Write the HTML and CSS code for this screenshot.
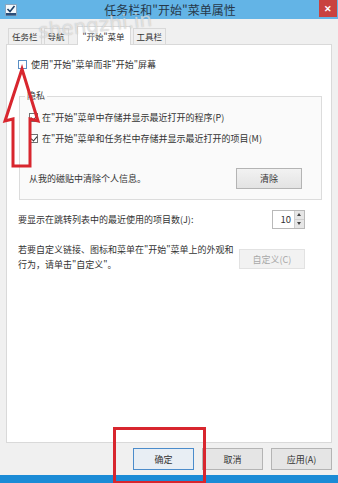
FILE: index.html
```html
<!DOCTYPE html>
<html lang="zh-CN">
<head>
    <meta charset="UTF-8">
    <title>任务栏和"开始"菜单属性</title>
    <link rel="stylesheet" href="styles.css">
</head>
<body>
    <div class="window">
        <div class="titlebar">
            <svg class="app-icon" width="12" height="12" viewBox="0 0 12 12">
                <rect x="0.5" y="0.5" width="11" height="11" fill="#f4f8fb" stroke="#8aa6bf"/>
                <rect x="1" y="9" width="10" height="2.5" fill="#2b4f7a"/>
                <path d="M2.5 5 L5 7.5 L9.5 2" fill="none" stroke="#1d3f66" stroke-width="1.6"/>
            </svg>
            <div class="title">任务栏和"开始"菜单属性</div>
            <div class="close">&#x2715;</div>
        </div>

        <div class="client">
            <div class="tabs">
                <div class="tab">任务栏</div>
                <div class="tab">导航</div>
                <div class="tab active">"开始"菜单</div>
                <div class="tab">工具栏</div>
            </div>

            <div class="panel">
                <label class="check first"><span class="box focus"></span>使用"开始"菜单而非"开始"屏幕</label>

                <fieldset class="group">
                    <legend>隐私</legend>
                    <label class="check"><span class="box checked"></span>在"开始"菜单中存储并显示最近打开的程序(P)</label>
                    <label class="check second"><span class="box checked"></span>在"开始"菜单和任务栏中存储并显示最近打开的项目(M)</label>
                    <div class="row clear-row">
                        <span>从我的磁贴中清除个人信息。</span>
                        <button class="btn">清除</button>
                    </div>
                </fieldset>

                <div class="row count-row">
                    <span>要显示在跳转列表中的最近使用的项目数(J):</span>
                    <div class="spin">
                        <span class="spin-value">10</span>
                        <div class="spin-arrows">
                            <span class="up"></span>
                            <span class="down"></span>
                        </div>
                    </div>
                </div>

                <div class="row custom-row">
                    <p>若要自定义链接、图标和菜单在"开始"菜单上的外观和<br>行为，请单击"自定义"。</p>
                    <button class="btn" disabled>自定义(C)</button>
                </div>
            </div>

            <div class="footer">
                <button class="btn default">确定</button>
                <button class="btn">取消</button>
                <button class="btn">应用(A)</button>
            </div>
        </div>

        <div class="taskbar"></div>

        <div class="watermark">shengzhi.in</div>

        <svg class="annotations" width="338" height="483" viewBox="0 0 338 483">
            <polygon points="22,69 38,121 30,119 30,166 13,166 13,119 5,121" fill="none" stroke="#d8262e" stroke-width="3" stroke-linejoin="miter"/>
            <rect x="114.5" y="428.5" width="90" height="54" fill="none" stroke="#d8262e" stroke-width="3"/>
        </svg>
    </div>
</body>
</html>
```

FILE: styles.css
```css
* {
    box-sizing: border-box;
}

body {
    margin: 0;
    width: 338px;
    height: 483px;
    overflow: hidden;
    font-family: "Noto Sans CJK SC", "Liberation Sans", sans-serif;
    font-size: 9px;
    color: #333;
    background: #f0f0f0;
}

.window {
    position: relative;
    height: 483px;
    display: flex;
    flex-direction: column;
}

.titlebar {
    height: 19px;
    flex-shrink: 0;
    background: #63b4e6;
    display: flex;
    align-items: center;
}

.app-icon {
    margin-left: 5px;
}

.title {
    flex: 1;
    text-align: center;
    font-size: 12px;
    color: #26384a;
    padding-left: 4px;
}

.close {
    align-self: flex-start;
    width: 18px;
    height: 17px;
    margin-right: 1px;
    background: #c9423f;
    color: #fff;
    font-size: 9px;
    font-weight: bold;
    text-align: center;
    line-height: 17px;
}

.client {
    flex: 1;
    padding: 6px 6px 0 6px;
    display: flex;
    flex-direction: column;
}

.tabs {
    display: flex;
    align-items: flex-end;
    height: 19px;
    padding-left: 2px;
}

.tab {
    height: 16px;
    line-height: 15px;
    padding: 0 3px;
    margin-right: 2px;
    border: 1px solid #d9d9d9;
    border-bottom: none;
    background: #f0f0f0;
    color: #333;
    font-size: 8.5px;
}

.tab.active {
    height: 19px;
    line-height: 18px;
    margin: 0 2px -1px 6px;
    padding: 0 5px;
    background: #fff;
    position: relative;
}

.panel {
    height: 399px;
    background: #fff;
    border: 1px solid #d9d9d9;
    padding: 0 26px 0 11px;
}

.check {
    display: flex;
    align-items: center;
    height: 12px;
    white-space: nowrap;
}

.check.first {
    margin-top: 13px;
}

.box {
    display: inline-block;
    width: 9px;
    height: 9px;
    margin-right: 4px;
    border: 1px solid #707070;
    background: #fff;
    position: relative;
}

.box.focus {
    border-color: #5b8fc4;
}

.box.checked::after {
    content: "";
    position: absolute;
    left: 2px;
    top: 0;
    width: 3px;
    height: 5px;
    border: solid #333;
    border-width: 0 1.5px 1.5px 0;
    transform: rotate(40deg);
}

.group {
    margin: 20px -17px 0 1px;
    padding: 0 19px 10px 9px;
    border: 1px solid #dcdcdc;
    background: #fafafa;
}

.group legend {
    padding: 0 2px;
    margin-left: -4px;
    line-height: 12px;
    color: #444;
}

.group .check {
    margin-top: 9px;
}

.row {
    display: flex;
    justify-content: space-between;
    align-items: center;
}

.clear-row {
    margin-top: 24px;
}

.btn {
    width: 66px;
    height: 21px;
    padding: 0;
    font-family: inherit;
    font-size: 9px;
    color: #333;
    background: linear-gradient(#f2f2f2, #e3e3e3);
    border: 1px solid #b4b4b4;
}

.btn:disabled {
    color: #a8a8a8;
    background: #f2f2f2;
    border-color: #e2e2e2;
}

.count-row {
    margin-top: 10px;
    height: 19px;
}

.spin {
    display: flex;
    width: 33px;
    height: 19px;
    border: 1px solid #b9b9b9;
    background: #fff;
}

.spin-value {
    flex: 1;
    text-align: right;
    padding-right: 3px;
    line-height: 17px;
    font-size: 9.5px;
}

.spin-arrows {
    width: 10px;
    display: flex;
    flex-direction: column;
    background: #e6e6e6;
    border-left: 1px solid #cfcfcf;
}

.spin-arrows span {
    flex: 1;
    position: relative;
}

.spin-arrows .up {
    border-bottom: 1px solid #cfcfcf;
}

.spin-arrows span::after {
    content: "";
    position: absolute;
    left: 2px;
    top: 2px;
    border-left: 2.5px solid transparent;
    border-right: 2.5px solid transparent;
}

.spin-arrows .up::after {
    border-bottom: 3px solid #444;
}

.spin-arrows .down::after {
    border-top: 3px solid #444;
}

.custom-row {
    margin-top: 13px;
    align-items: flex-start;
}

.custom-row p {
    margin: 0;
    line-height: 15px;
}

.custom-row .btn {
    margin-top: 7px;
    height: 20px;
}

.footer {
    display: flex;
    justify-content: flex-end;
    gap: 8px;
    padding-top: 5px;
}

.footer .btn {
    width: 61px;
    height: 22px;
    background: #e5e5e5;
}

.footer .btn.default {
    border-color: #4b8ccb;
    background: #e8eef4;
}

.taskbar {
    height: 8px;
    flex-shrink: 0;
    background: #1b8bd6;
}

.watermark {
    position: absolute;
    left: 38px;
    top: 13px;
    font-family: "DejaVu Sans", sans-serif;
    font-size: 20px;
    color: rgba(255, 255, 255, 0.55);
    text-shadow: 0 0 1px rgba(120, 120, 120, 0.5);
    transform: rotate(-6deg);
    pointer-events: none;
}

.annotations {
    position: absolute;
    left: 0;
    top: 0;
    pointer-events: none;
}
```
